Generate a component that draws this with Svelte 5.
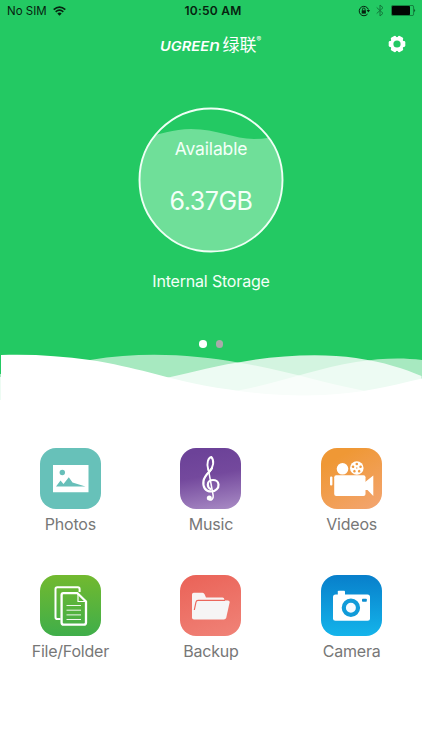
<script lang="ts">
    interface App {
        id: string;
        label: string;
    }

    const rows: App[][] = [
        [
            { id: "photos", label: "Photos" },
            { id: "music", label: "Music" },
            { id: "videos", label: "Videos" },
        ],
        [
            { id: "files", label: "File/Folder" },
            { id: "backup", label: "Backup" },
            { id: "camera", label: "Camera" },
        ],
    ];

    let storage = $state({ title: "Internal Storage", free: "6.37GB" });
    let page = $state(0);
</script>

<main class="screen">
    <section class="top">
        <div class="status">
            <div class="carrier">
                <span>No SIM</span>
                <svg width="13" height="10" viewBox="0 0 13 10">
                    <g fill="none" stroke="#06220f" stroke-width="1.7">
                        <path d="M.7 3.7Q6.5-1.500 12.300 3.700" />
                        <path d="M2.700 5.900Q6.500 2.500 10.300 5.900" />
                    </g>
                    <path d="M4.300 7.400Q6.500 5.600 8.700 7.400L6.500 9.700Z" fill="#06220f" />
                </svg>
            </div>
            <span class="time">10:50 AM</span>
            <div class="indicators">
                <svg width="12" height="12" viewBox="0 0 12 12">
                    <path
                        d="M9.600 9A4.700 4.700 0 1 1 10.400 4.600"
                        fill="none"
                        stroke="#06220f"
                        stroke-width="1"
                    />
                    <path d="M8.600 5.100H12L10.400 7.500Z" fill="#06220f" />
                    <rect x="3.700" y="5.300" width="4.200" height="3.300" fill="#06220f" />
                    <path
                        d="M4.500 5.500V4.300a1.300 1.300 0 0 1 2.600 0V5.500"
                        fill="none"
                        stroke="#06220f"
                        stroke-width=".9"
                    />
                </svg>
                <svg class="bluetooth" width="8" height="13" viewBox="0 0 8 13">
                    <path
                        d="M.7 3.500L7 9.300 4 12V1L7 3.700.7 9.500"
                        fill="none"
                        stroke="#13773b"
                        stroke-width="1"
                    />
                </svg>
                <svg class="battery" width="25" height="11" viewBox="0 0 25 11">
                    <rect
                        x=".4"
                        y=".4"
                        width="22.200"
                        height="10.200"
                        rx="1.500"
                        fill="none"
                        stroke="#106a34"
                        stroke-width=".8"
                    />
                    <rect x="1" y="1" width="18" height="9" rx=".8" fill="#010502" />
                    <path d="M23.400 3.700Q25 5.500 23.400 7.300Z" fill="#06220f" />
                </svg>
            </div>
        </div>

        <header class="navbar">
            <svg class="brand" width="106" height="36" viewBox="0 0 106 36">
                <g fill="#fff">
                    <text
                        class="latin"
                        x="2"
                        y="24.700"
                        textLength="60"
                        lengthAdjust="spacingAndGlyphs">UGREE<tspan class="tall">n</tspan></text
                    >
                    <text class="han" x="64.500" y="24.800" textLength="34">绿联</text>
                    <text class="mark" x="98.500" y="15.500">®</text>
                </g>
            </svg>
            <button class="settings" aria-label="Settings">
                <svg width="18" height="18" viewBox="-9 -9 18 18">
                    <g fill="#fff">
                        {#each [0, 60, 120] as angle}
                            <rect
                                x="-2.900"
                                y="-8.300"
                                width="5.800"
                                height="16.600"
                                rx="1.300"
                                transform="rotate({angle + 30})"
                            />
                        {/each}
                        <circle r="7" />
                    </g>
                    <circle r="3.600" fill="#23c963" />
                </svg>
            </button>
        </header>

        <div class="gauge">
            <svg class="level" width="146" height="146" viewBox="0 0 146 146">
                <defs>
                    <clipPath id="disc"><circle cx="73" cy="73" r="71.500" /></clipPath>
                </defs>
                <path
                    clip-path="url(#disc)"
                    d="M0 31C22 28 35 22 53 22C79 22 96 32 116 32C127 32 137 30 146 28V146H0Z"
                    fill="#6fdf99"
                />
                <circle
                    cx="73"
                    cy="73"
                    r="71.500"
                    fill="none"
                    stroke="#effff5"
                    stroke-width="1.900"
                />
            </svg>
            <div class="reading">
                <span class="caption">Available</span>
                <span class="amount">{storage.free}</span>
            </div>
        </div>
        <p class="volume">{storage.title}</p>

        <div class="dots">
            {#each [0, 1] as n}
                <i class:active={n === page}></i>
            {/each}
        </div>

        <svg class="waves" width="422" height="50" viewBox="0 0 422 50">
            <g fill="#fff">
                <path
                    opacity=".6"
                    d="M0 24C35 21 60 15 90 10C145 1 194 5 238 12.500C284 20 322 33 365 41V50H0Z"
                />
                <path opacity=".6" d="M225 43C274 35 313 19 356 12C382 8 402 7.500 422 10V50H225Z" />
                <path
                    opacity=".8"
                    d="M150 31C184 25 208 17 238 12.500C278 5 322 3 356 8C384 12 405 19 421.500 26V50H150Z"
                />
                <path opacity=".8" d="M0 27H2V50H0Z" />
                <path
                    d="M1 5C33 4 61 6 90 10C136 17 165 28 204 35.500C241 42 281 47 324 45C361 43 386 37 422 28.500V50H1Z"
                />
            </g>
        </svg>
    </section>

    <section class="apps">
        {#each rows as row}
            <div class="row">
                {#each row as app (app.id)}
                    <div class="app">
                        <div class="tile {app.id}">
                            <svg width="61" height="61" viewBox="0 0 61 61">
                                {#if app.id === "photos"}
                                    <path d="M13 17H48.500V44.300H13Z" fill="#fff" />
                                    <circle cx="22.300" cy="24.500" r="2.700" fill="#67bfb9" />
                                    <path
                                        d="M16 38.500L20.500 32.500 23.500 36 28.800 29.300 32.500 34.500 45.500 38.500Z"
                                        fill="#67bfb9"
                                    />
                                {:else if app.id === "music"}
                                    <g fill="none" stroke="#fff" stroke-linecap="round">
                                        <path
                                            d="M28.300 22C26 15 28.500 9.500 31.300 9C34.500 12.500 33.800 18.500 29 24.500"
                                            stroke-width="1.900"
                                        />
                                        <path
                                            d="M32 20C30 24 24.500 27 23.500 33C22.500 39 25.500 43.500 31 43.500C36 43.500 38.800 40 38.500 36.500C38 30.500 28 30.500 27.800 36.500C27.800 39 29 40.300 30.500 41"
                                            stroke-width="2.200"
                                        />
                                        <path
                                            d="M28.300 21L33.200 47.500C33.700 51 31 53 29 51.500"
                                            stroke-width="1.500"
                                        />
                                    </g>
                                    <circle cx="29.300" cy="50" r="2.500" fill="#fff" />
                                {:else if app.id === "videos"}
                                    <g fill="#fff">
                                        <circle cx="21.500" cy="20.800" r="5.800" />
                                        <circle cx="35.800" cy="20" r="6.800" />
                                        <rect x="13.200" y="27.300" width="31.300" height="20.700" rx="2" />
                                        <rect x="9" y="28.500" width="2.400" height="9" rx="1" />
                                        <path d="M43.500 34.500L52.300 27.500V48L46.500 42H43.500Z" />
                                    </g>
                                    <g fill="#f09c43">
                                        {#each [0, 72, 144, 216, 288] as angle}
                                            <circle
                                                cx="35.800"
                                                cy="16"
                                                r="1.300"
                                                transform="rotate({angle} 35.8 20)"
                                            />
                                        {/each}
                                        <circle cx="35.800" cy="20" r=".7" />
                                    </g>
                                {:else if app.id === "files"}
                                    <g fill="none" stroke="#fff" stroke-linejoin="round">
                                        <path
                                            d="M20.500 44H17.300Q15.500 44 15.500 42.200V14Q15.500 12.200 17.300 12.200H37.800Q39.600 12.200 39.600 14V17"
                                            stroke-width="2"
                                        />
                                        <path
                                            d="M23.300 18.200H37.500L46 26.500V47.500Q46 49.700 43.800 49.700H23.800Q21.600 49.700 21.600 47.500V20Q21.600 18.200 23.300 18.200Z"
                                            stroke-width="2.300"
                                        />
                                        <path d="M38 19V26.500H45.500" stroke-width="1.200" />
                                        <path
                                            d="M26.500 30.500H41M26.500 35.200H41M26.500 39.900H41M26.500 44.500H41"
                                            stroke-width=".9"
                                        />
                                    </g>
                                {:else if app.id === "backup"}
                                    <path
                                        d="M12 43V19.500Q12 17.800 13.700 17.800H22.500Q24 17.800 24.600 19.300L26 22.500H42.500Q44.300 22.500 44.300 24.300V43Z"
                                        fill="#f8f4f4"
                                    />
                                    <path
                                        d="M16.300 26.500Q16.600 25.500 18.200 25.500H47.800Q50 25.500 49.600 27.500L46.300 42.500Q45.800 44.500 43.800 44.500H14Q11.900 44.500 12 42.500Z"
                                        fill="#f6f5f5"
                                    />
                                    <path
                                        d="M14.300 35L16 27Q16.400 25.300 18.100 25.300H45"
                                        fill="none"
                                        stroke="#eb675c"
                                        stroke-width="1.200"
                                    />
                                {:else}
                                    <g fill="#fff">
                                        <rect x="16.800" y="15.800" width="7.200" height="5" rx=".8" />
                                        <rect x="12" y="19.600" width="37" height="26.200" rx="2.500" />
                                    </g>
                                    <circle
                                        cx="29.900"
                                        cy="32.800"
                                        r="7.100"
                                        fill="#f4faff"
                                        stroke="#109bd9"
                                        stroke-width="4.200"
                                    />
                                    <rect x="41" y="23.800" width="4.800" height="3" rx=".8" fill="#0c8dd0" />
                                {/if}
                            </svg>
                        </div>
                        <span class="label">{app.label}</span>
                    </div>
                {/each}
            </div>
        {/each}
    </section>
</main>

<style>
    :global(body) {
        margin: 0;
        background: #fff;
    }

    .screen {
        width: 422px;
        height: 750px;
        overflow: hidden;
        background: #fff;
        font-family: Inter, "Noto Sans CJK SC", sans-serif;
    }

    .top {
        display: flex;
        flex-direction: column;
        height: 400px;
        background: #23c963;
        color: #f4fff8;
    }

    .status {
        display: grid;
        grid-template-columns: 1fr auto 1fr;
        align-items: center;
        height: 21px;
        padding: 0 6px 0 7px;
        font-size: 11.5px;
        color: #06220f;
    }

    .carrier {
        display: flex;
        align-items: center;
        gap: 6px;
    }

    .time {
        padding-left: 3px;
        font-weight: 600;
        font-size: 12px;
        letter-spacing: 0.25px;
    }

    .indicators {
        display: flex;
        justify-content: flex-end;
        align-items: center;
    }

    .bluetooth {
        margin-left: 6px;
    }

    .battery {
        margin-left: 7px;
    }

    .navbar {
        display: grid;
        grid-template-columns: 1fr auto 1fr;
        align-items: center;
        height: 45px;
        padding: 0 16px;
    }

    .brand {
        grid-column: 2;
    }

    .latin {
        font: italic 600 13.5px Inter, sans-serif;
    }

    .tall {
        font-size: 16.5px;
        font-weight: 500;
    }

    .han {
        font: 400 17px "Noto Sans CJK SC", sans-serif;
    }

    .mark {
        font: 7px Inter, sans-serif;
    }

    .settings {
        justify-self: end;
        display: flex;
        padding: 0;
        border: none;
        background: none;
    }

    .gauge {
        display: grid;
        align-self: center;
        margin-top: 40.5px;
    }

    .level,
    .reading {
        grid-area: 1 / 1;
    }

    .reading {
        display: flex;
        flex-direction: column;
        align-items: center;
        padding-top: 30.5px;
        z-index: 1;
    }

    .caption {
        font-size: 17.5px;
        line-height: 24px;
        letter-spacing: -0.15px;
    }

    .amount {
        margin-top: 23.5px;
        font-size: 25px;
        line-height: 32px;
        letter-spacing: -0.5px;
    }

    .volume {
        margin: 17px 0 0;
        text-align: center;
        font-size: 16px;
        line-height: 22px;
        letter-spacing: -0.18px;
    }

    .dots {
        display: flex;
        justify-content: center;
        gap: 9px;
        margin-top: 48.5px;
    }

    .dots i {
        width: 7.5px;
        height: 7.5px;
        border-radius: 50%;
        background: #aaa;
    }

    .dots .active {
        background: #fff;
    }

    .waves {
        flex: none;
        margin-top: auto;
    }

    .apps {
        display: flex;
        flex-direction: column;
        gap: 40px;
        padding-top: 48px;
    }

    .row {
        display: grid;
        grid-template-columns: repeat(3, 1fr);
    }

    .app {
        display: flex;
        flex-direction: column;
        align-items: center;
        height: 87px;
    }

    .tile {
        width: 61px;
        height: 61px;
        border-radius: 16px;
    }

    .tile svg {
        display: block;
    }

    .photos {
        background: #67c1b9;
    }

    .music {
        background: linear-gradient(170deg, #6c4298 10%, #74499d 45%, #a98cc5 100%);
    }

    .videos {
        background: linear-gradient(150deg, #ef9835 20%, #f3a572);
    }

    .files {
        background: linear-gradient(#72b92f, #3fae4a);
    }

    .backup {
        background: linear-gradient(160deg, #ea6257, #f08378);
    }

    .camera {
        background: linear-gradient(#087fcb, #14b4ea);
    }

    .label {
        margin-top: 4px;
        font-size: 16px;
        line-height: 22px;
        letter-spacing: -0.22px;
        color: #777;
    }
</style>
